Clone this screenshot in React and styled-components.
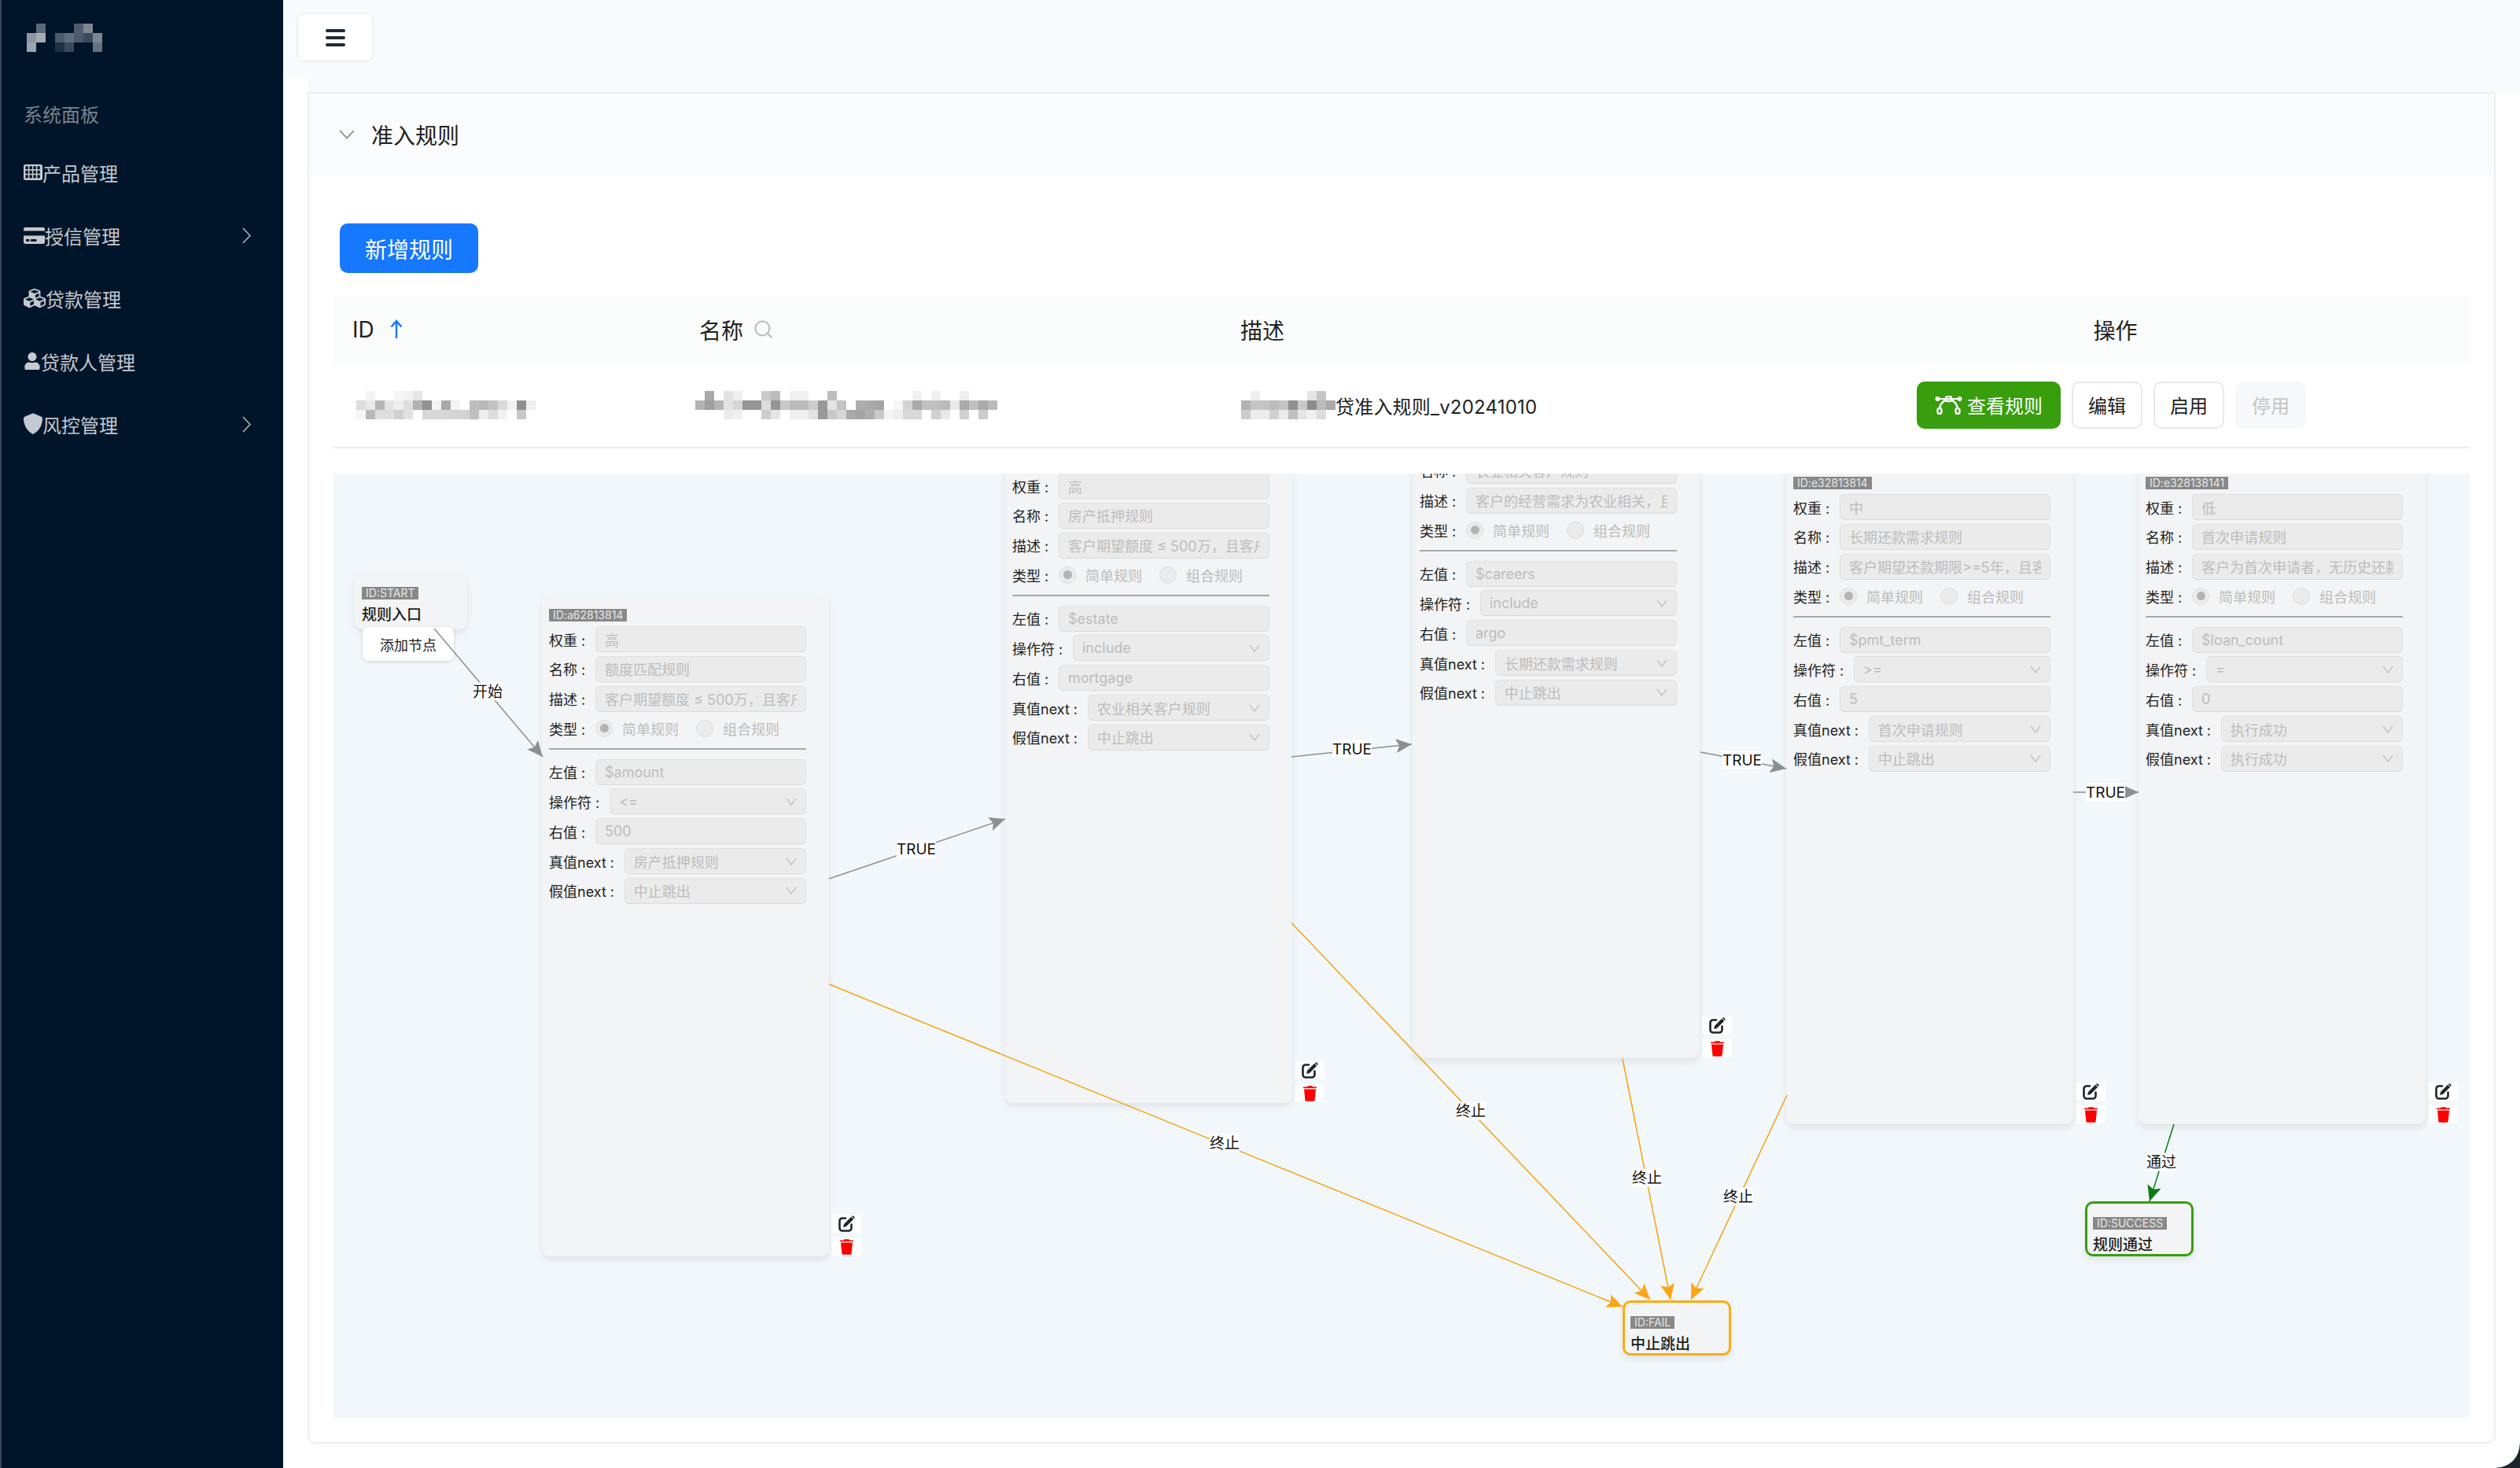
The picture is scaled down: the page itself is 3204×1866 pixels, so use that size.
import React from "react";
import styled, { createGlobalStyle } from "styled-components";
import { FaCreditCard, FaCubes, FaUser } from "react-icons/fa";
import { Search } from "lucide-react";

const Global = createGlobalStyle`
  html, body { margin: 0; padding: 0; background: #fff; }
  body { font-family: Inter, "Noto Sans CJK SC", sans-serif; color: #222; overflow: hidden; }
  * { box-sizing: border-box; }
`;

const Page = styled.div`
  position: relative;
  width: 3204px;
  height: 1866px;
  display: flex;
  overflow: hidden;
  background: #fff;
`;
const ScreenCorner = styled.div`
  position: absolute;
  right: 0;
  bottom: 0;
  width: 30px;
  height: 30px;
  background: radial-gradient(circle at 0 0, transparent 29px, #1c2430 30px);
`;

/* ---------- sidebar ---------- */
const Sidebar = styled.aside`
  width: 360px;
  flex: none;
  background: #001529;
  border-left: 2px solid #34475e;
  display: flex;
  flex-direction: column;
  padding: 30px 0 0 28px;
`;
const LogoBox = styled.div`
  margin-left: 4px;
  height: 36px;
  line-height: 0;
`;
const SectionLabel = styled.div`
  margin-top: 66px;
  height: 30px;
  line-height: 30px;
  font-size: 24px;
  color: #77818c;
`;
const Menu = styled.nav`
  margin-top: 17px;
  display: flex;
  flex-direction: column;
`;
const MenuItem = styled.div`
  height: 80px;
  display: flex;
  align-items: center;
  font-size: 24px;
  color: #c3c8ce;
  padding-right: 41px;
  & > svg:first-child { flex: none; color: #c4cad0; }
`;
const MenuText = styled.span`
  flex: 1;
`;

/* ---------- main ---------- */
const Main = styled.main`
  flex: 1;
  min-width: 0;
  display: flex;
  flex-direction: column;
`;
const TopBar = styled.header`
  height: 98px;
  flex: none;
  background: #f8fafc;
  padding: 16px 0 0 17px;
`;
const MenuButton = styled.button`
  width: 98px;
  height: 63px;
  border: 2px solid #eef0f3;
  border-radius: 10px;
  background: #fff;
  display: flex;
  flex-direction: column;
  justify-content: center;
  align-items: center;
  gap: 5px;
  padding: 0;
`;
const BurgerLine = styled.span`
  width: 25px;
  height: 4px;
  border-radius: 2px;
  background: #1f2937;
`;
const Body = styled.div`
  flex: 1;
  padding: 0 31px 31px;
  background: #fff;
`;
const TopBand = styled.div`
  height: 19px;
  margin-right: -31px;
  background: #f8fafc;
`;
const Card = styled.section`
  height: 1718px;
  border: 2px solid #ebedef;
  border-radius: 0 0 10px 10px;
  overflow: hidden;
`;
const CollapseHeader = styled.div`
  height: 104px;
  background: #fafbfc;
  display: flex;
  align-items: center;
  padding-left: 38px;
  gap: 21px;
  font-size: 28px;
  color: #222;
`;
const CollapseBody = styled.div`
  padding: 61px 31px 0;
`;
const PrimaryButton = styled.button`
  display: block;
  margin-left: 8px;
  width: 176px;
  height: 63px;
  border: 0;
  border-radius: 10px;
  background: #1677ff;
  color: #fff;
  font: inherit;
  font-size: 28px;
`;
const Table = styled.div`
  margin-top: 29px;
`;
const TableGrid = styled.div`
  display: grid;
  grid-template-columns: 445px 684px 692px 895px;
`;
const HeadRow = styled(TableGrid)`
  height: 85px;
  background: #fafbfb;
  font-size: 28px;
  color: #222;
`;
const HeadCell = styled.div`
  position: relative;
  display: flex;
  align-items: center;
  gap: ${(p) => p.$gap ?? 18}px;
  padding-left: ${(p) => p.$pad ?? 24}px;
  padding-right: ${(p) => (p.$center ? 6 : 0)}px;
  justify-content: ${(p) => (p.$center ? "center" : "flex-start")};
  & + &::before {
    content: "";
    position: absolute;
    left: 0;
    top: 8px;
    bottom: 8px;
    width: 2px;
    background: #f3f4f5;
  }
`;
const BodyRow = styled(TableGrid)`
  height: 109px;
  border-bottom: 2px solid #ebebeb;
  font-size: 24px;
  color: #222;
`;
const BodyCell = styled.div`
  display: flex;
  align-items: center;
  padding-left: ${(p) => p.$pad ?? 29}px;
  padding-top: 1px;
`;
const DescText = styled.span`
  letter-spacing: 0.2px;
`;
const Actions = styled.div`
  display: flex;
  align-items: center;
  justify-content: center;
  gap: 14px;
  padding-right: 16px;
`;
const ActionButton = styled.button`
  height: 60px;
  width: ${(p) => (p.$wide ? 183 : 90)}px;
  display: flex;
  align-items: center;
  justify-content: center;
  gap: 6px;
  padding: 0;
  border-radius: 10px;
  font: inherit;
  font-size: 24px;
  color: ${(p) => (p.$kind === "green" ? "#fff" : p.$kind === "off" ? "#c2c4c6" : "#222")};
  background: ${(p) => (p.$kind === "green" ? "#389e0d" : p.$kind === "off" ? "#f7f8f9" : "#fff")};
  border: 2px solid ${(p) => (p.$kind === "green" ? "#389e0d" : p.$kind === "off" ? "#f7f8f9" : "#e9e9e9")};
`;

/* ---------- canvas ---------- */
const Canvas = styled.div`
  position: relative;
  margin-top: 32px;
  height: 1200px;
  background: #f1f7fb;
  overflow: hidden;
`;
const NodeBase = styled.div`
  position: absolute;
  left: ${(p) => p.$x}px;
  top: ${(p) => p.$y}px;
  background: #f2f4f5;
  border-radius: 10px;
  box-shadow: 0 5px 9px rgba(0, 0, 0, 0.08);
`;
const RuleCard = styled(NodeBase)`
  width: 365px;
  height: 841px;
  padding: 18px 29px 0 9px;
`;
const IdTag = styled.div`
  width: fit-content;
  height: 16px;
  line-height: 16px;
  padding: 0 5px;
  background: #888;
  color: #e6e6e6;
  font-size: 14px;
  white-space: nowrap;
`;
const Form = styled.div`
  margin-top: 6px;
  display: flex;
  flex-direction: column;
`;
const Row = styled.div`
  display: flex;
  align-items: center;
  height: 33px;
  margin-bottom: 4.8px;
`;
const Label = styled.label`
  flex: none;
  font-size: 18px;
  color: #222;
  white-space: nowrap;
  &::after {
    content: ":";
    display: inline-block;
    width: 18px;
    padding-left: 5px;
  }
`;
const Field = styled.div`
  flex: 1;
  min-width: 0;
  height: 33px;
  display: flex;
  align-items: center;
  padding: 0 11px;
  background: #ebebeb;
  border: 1px solid #e0e0e0;
  border-bottom-color: #dadada;
  border-radius: 6px;
  color: #bcbcbc;
  font-size: 18px;
`;
const FieldText = styled.span`
  flex: 1;
  min-width: 0;
  overflow: hidden;
  white-space: nowrap;
`;
const RadioGroup = styled.div`
  display: flex;
  align-items: center;
`;
const RadioDot = styled.span`
  flex: none;
  width: 22px;
  height: 22px;
  border-radius: 50%;
  background: #ebebeb;
  border: 1px solid #dedede;
  display: flex;
  align-items: center;
  justify-content: center;
  margin-right: 12px;
  &::after {
    content: "";
    width: 11px;
    height: 11px;
    border-radius: 50%;
    background: ${(p) => (p.$on ? "#b3b3b3" : "transparent")};
  }
`;
const RadioText = styled.span`
  font-size: 18px;
  color: #bcbcbc;
  margin-right: 22px;
`;
const Divider = styled.div`
  height: 2px;
  background: #a6a8a9;
  margin: 4px 0 11.5px;
`;
const ToolStack = styled.div`
  position: absolute;
  left: calc(100% + 4px);
  bottom: 1px;
  display: flex;
  flex-direction: column;
  gap: 6px;
`;
const ToolBox = styled.div`
  width: 37px;
  height: 23px;
  background: #fff;
  display: flex;
  align-items: center;
  justify-content: center;
`;
const StartCard = styled(NodeBase)`
  width: 143px;
  height: 72px;
  padding: 18px 9px 0;
`;
const NodeName = styled.div`
  margin-top: 10px;
  font-size: 19px;
  line-height: 20px;
  font-weight: 500;
  color: #1c1c1c;
  white-space: nowrap;
`;
const AddNode = styled.div`
  position: absolute;
  left: 10px;
  top: 69px;
  width: 116px;
  height: 43px;
  padding-left: 22px;
  display: flex;
  align-items: center;
  background: #fff;
  border-radius: 8px;
  box-shadow: 0 1px 4px rgba(0, 0, 0, 0.16);
  font-size: 18px;
  color: #222;
`;
const EndCard = styled(NodeBase)`
  width: 138px;
  height: 70px;
  padding: 17px 7px 0;
  border: 3px solid ${(p) => p.$color};
`;
const EdgeLayer = styled.svg`
  position: absolute;
  left: 0;
  top: 0;
  pointer-events: none;
`;
const EdgeLabel = styled.div`
  position: absolute;
  left: ${(p) => p.$x}px;
  top: ${(p) => p.$y}px;
  transform: translate(-50%, -50%);
  background: #fff;
  padding: 0;
  height: 23px;
  line-height: 23px;
  font-size: 19px;
  color: #111;
  white-space: nowrap;
`;

/* ---------- drawings ---------- */
function Mosaic({ rows }) {
  const w = Math.max(...rows.map((r) => r.length)) * 12;
  return (
    <svg width={w} height={rows.length * 12} shapeRendering="crispEdges">
      {rows.map((r, y) =>
        r.map((c, x) => (c ? <rect key={x + "-" + y} x={x * 12} y={y * 12} width="12" height="12" fill={c} /> : null))
      )}
    </svg>
  );
}
const g = (v) => (v ? `#${v}${v}${v}` : null);
const rowOf = (s) => s.split(" ").map((v) => (v === "_" ? null : v.length === 2 ? g(v) : "#" + v));

const LOGO = [
  rowOf("_ 5b6878 _ _ _ 4f5d6e 7c8793 _"),
  rowOf("8e98a3 a3adb5 _ 4a5a6c 5f6d7c 4a5a6c 3a4a5c 7a8693"),
  rowOf("9aa5ac _ _ 1e3044 3a4a5c _ _ 66727f"),
];
const MOSAIC_ID = [
  rowOf("_ f3 _ _ f5 f2 e6"),
  rowOf("dc e8 b5 e4 ee de b0 90 f3 a9 f3 _ bd b9 c3 da f2 8f ef"),
  rowOf("f5 b8 de de cf e2 _ d7 d7 d7 d3 d3 bf ee dc f2 _ c8"),
];
const MOSAIC_NAME = [
  rowOf("_ a9 _ e3 f0 _ _ c9 bc _ f0 f0 _ _ bd _ _ _ _ _ _ _ _ f2 _ f0 _ _ ee"),
  rowOf("b3 9e b5 e3 d5 95 95 dd 96 c8 bb bb cc 99 e4 c3 _ ad a9 a5 _ f6 d2 a9 c0 c0 bb e8 aa c0 aa bb"),
  rowOf("_ _ _ ec f0 _ _ cd e5 _ f0 f0 e2 99 c8 d6 aa a5 ae c9 f5 ee d8 d8 _ d0 e8 _ d0 _ cc"),
];
const MOSAIC_DESC = [
  rowOf("_ ee _ _ _ _ _ e4 c5"),
  rowOf("b3 c4 c4 bb c4 90 c8 8c bb aa"),
  rowOf("cc ec ec d0 ea c0 e5 f0 dd"),
];

const GridIcon = () => (
  <svg width="24" height="20" viewBox="0 0 24 20">
    <rect width="24" height="20" rx="2.5" fill="currentColor" />
    {[0, 1, 2].map((r) =>
      [0, 1, 2, 3].map((c) => (
        <rect key={r + "" + c} x={2.4 + c * 5} y={2.2 + r * 5.6} width="3.4" height="4" fill="#001529" />
      ))
    )}
  </svg>
);
const ShieldIcon = () => (
  <svg width="24" height="28" viewBox="0 0 24 28" fill="currentColor">
    <path d="M12 .5c.5 0 1 .1 1.4.3l8.8 3.6c1 .4 1.8 1.4 1.8 2.6 0 5-2 14.8-12 20-10-5.2-12-15-12-20 0-1.2.8-2.2 1.8-2.6L10.6.8C11 .6 11.500.5 12 .5z" />
  </svg>
);
const Chevron = ({ dir = "right", color = "#b2b9c0" }) =>
  dir === "right" ? (
    <svg width="11" height="21" viewBox="0 0 11 21" fill="none" stroke={color} strokeWidth="1.5">
      <path d="M1 1l9 9.5L1 20" />
    </svg>
  ) : (
    <svg width="20" height="12" viewBox="0 0 20 12" fill="none" stroke={color} strokeWidth="1.8">
      <path d="M1 1l9 9.5L19 1" />
    </svg>
  );
const SelectArrow = () => (
  <svg width="14" height="10" viewBox="0 0 14 10" fill="none" stroke="#b8b8b8" strokeWidth="1.2">
    <path d="M1 1l6 8 6-8" />
  </svg>
);
const SortArrow = () => (
  <svg width="16" height="25" viewBox="0 0 16 25" fill="none" stroke="#1677ff" strokeWidth="2.4">
    <path d="M8 24V2M1.5 9.5L8 2l6.5 7.5" />
  </svg>
);
const BezierIcon = () => (
  <svg width="35" height="24" viewBox="0 0 35 24" fill="none" stroke="#fff">
    <path d="M3 4h29" strokeWidth="2" />
    <circle cx="3.5" cy="4" r="3" fill="#fff" stroke="none" />
    <circle cx="31.5" cy="4" r="3" fill="#fff" stroke="none" />
    <rect x="14" y="1" width="7" height="6" rx="2" strokeWidth="2.4" />
    <path d="M14.5 5C9 7.5 6.5 11 6 17M20.5 5C26 7.5 28.5 11 29 17" strokeWidth="2.6" />
    <rect x="3.5" y="16" width="5" height="7" rx="2.5" strokeWidth="2.4" />
    <rect x="26.5" y="16" width="5" height="7" rx="2.5" strokeWidth="2.4" />
  </svg>
);
const EditIcon = () => (
  <svg width="21" height="21" viewBox="0 0 21 21">
    <path
      d="M9 3.5H5A3.5 3.5 0 0 0 1.5 7v9A3.5 3.5 0 0 0 5 19.5h8a3.500 3.500 0 0 0 3.500-3.500v-4.500"
      fill="none"
      stroke="#20252b"
      strokeWidth="2.6"
      strokeLinecap="round"
    />
    <path d="M16.200 1.700l3 3L10 14l-3.900.9.900-3.900zM17.200.7a1.400 1.400 0 0 1 2 0l1 1a1.400 1.400 0 0 1 0 2l-.4.400-3-3z" fill="#20252b" />
  </svg>
);
const TrashIcon = () => (
  <svg width="17" height="21" viewBox="0 0 17 21" fill="#f00">
    <path d="M5.5 1.2h6L12 2.6h4.2a.8.8 0 0 1 .8.8v.8H0v-.8a.8.8 0 0 1 .8-.8H5z" />
    <path d="M1 5.4h15l-1.4 14a1.6 1.6 0 0 1-1.6 1.4H4a1.6 1.6 0 0 1-1.6-1.4z" />
  </svg>
);

/* ---------- data ---------- */
const OX = 424;
const OY = 602;
const RULES = [
  { x: 689, y: 756, id: "a62813814", w: "高", n: "额度匹配规则", d: "客户期望额度 ≤ 500万，且客户的信用良好", l: "$amount", o: "<=", r: "500", t: "房产抵押规则", f: "中止跳出" },
  { x: 1278, y: 561, id: "a62813815", w: "高", n: "房产抵押规则", d: "客户期望额度 ≤ 500万，且客户的信用良好", l: "$estate", o: "include", r: "mortgage", t: "农业相关客户规则", f: "中止跳出" },
  { x: 1796, y: 504, id: "b32813814", w: "高", n: "农业相关客户规则", d: "客户的经营需求为农业相关，且客户的信用良好", l: "$careers", o: "include", r: "argo", t: "长期还款需求规则", f: "中止跳出" },
  { x: 2271, y: 588, id: "e32813814", w: "中", n: "长期还款需求规则", d: "客户期望还款期限>=5年，且客户的信用良好", l: "$pmt_term", o: ">=", r: "5", t: "首次申请规则", f: "中止跳出" },
  { x: 2719, y: 588, id: "e328138141", w: "低", n: "首次申请规则", d: "客户为首次申请者，无历史还款记录的客户", l: "$loan_count", o: "=", r: "0", t: "执行成功", f: "执行成功" },
];
const GRAY = "#8b8f91";
const ORANGE = "#f5a40f";
const GREEN = "#0a7d12";
const EDGES = [
  { a: [552, 799], b: [690, 962], c: GRAY, m: "gray", label: "开始", at: [620, 879] },
  { a: [1054, 1117], b: [1278, 1041], c: GRAY, m: "gray", label: "TRUE", at: [1165, 1079] },
  { a: [1642, 962], b: [1795, 946], c: GRAY, m: "gray", label: "TRUE", at: [1719, 952] },
  { a: [2162, 956], b: [2271, 977], c: GRAY, m: "gray", label: "TRUE", at: [2215, 966] },
  { a: [2636, 1007], b: [2719, 1007], c: GRAY, m: "gray", label: "TRUE", at: [2677, 1007] },
  { a: [1054, 1251], b: [2063, 1661], c: ORANGE, m: "orange", label: "终止", at: [1557, 1453] },
  { a: [1642, 1173], b: [2098, 1652], c: ORANGE, m: "orange", label: "终止", at: [1870, 1412] },
  { a: [2063, 1346], b: [2124, 1652], c: ORANGE, m: "orange", label: "终止", at: [2094, 1497] },
  { a: [2272, 1392], b: [2150, 1652], c: ORANGE, m: "orange", label: "终止", at: [2210, 1521] },
  { a: [2764, 1429], b: [2733, 1527], c: GREEN, m: "green", label: "通过", at: [2748, 1477] },
];
const MARKERS = { gray: GRAY, orange: "#faa514", green: GREEN };

function TextField({ label, value }) {
  return (
    <Row>
      <Label>{label}</Label>
      <Field>
        <FieldText>{value}</FieldText>
      </Field>
    </Row>
  );
}
function SelectField({ label, value }) {
  return (
    <Row>
      <Label>{label}</Label>
      <Field>
        <FieldText>{value}</FieldText>
        <SelectArrow />
      </Field>
    </Row>
  );
}
function RuleNode({ rule }) {
  return (
    <RuleCard $x={rule.x - OX} $y={rule.y - OY}>
      <IdTag>ID:{rule.id}</IdTag>
      <Form>
        <TextField label="权重" value={rule.w} />
        <TextField label="名称" value={rule.n} />
        <TextField label="描述" value={rule.d} />
        <Row>
          <Label>类型</Label>
          <RadioGroup>
            <RadioDot $on />
            <RadioText>简单规则</RadioText>
            <RadioDot />
            <RadioText>组合规则</RadioText>
          </RadioGroup>
        </Row>
        <Divider />
        <TextField label="左值" value={rule.l} />
        <SelectField label="操作符" value={rule.o} />
        <TextField label="右值" value={rule.r} />
        <SelectField label="真值next" value={rule.t} />
        <SelectField label="假值next" value={rule.f} />
      </Form>
      <ToolStack>
        <ToolBox>
          <EditIcon />
        </ToolBox>
        <ToolBox>
          <TrashIcon />
        </ToolBox>
      </ToolStack>
    </RuleCard>
  );
}

export default function App() {
  return (
    <Page>
      <Global />
      <Sidebar>
        <LogoBox>
          <Mosaic rows={LOGO} />
        </LogoBox>
        <SectionLabel>系统面板</SectionLabel>
        <Menu>
          <MenuItem>
            <GridIcon />
            <MenuText>产品管理</MenuText>
          </MenuItem>
          <MenuItem>
            <FaCreditCard size={27} />
            <MenuText>授信管理</MenuText>
            <Chevron />
          </MenuItem>
          <MenuItem>
            <FaCubes size={28} />
            <MenuText>贷款管理</MenuText>
          </MenuItem>
          <MenuItem>
            <FaUser size={22} />
            <MenuText>贷款人管理</MenuText>
          </MenuItem>
          <MenuItem>
            <ShieldIcon />
            <MenuText>风控管理</MenuText>
            <Chevron />
          </MenuItem>
        </Menu>
      </Sidebar>
      <Main>
        <TopBar>
          <MenuButton>
            <BurgerLine />
            <BurgerLine />
            <BurgerLine />
          </MenuButton>
        </TopBar>
        <Body>
          <TopBand />
          <Card>
            <CollapseHeader>
              <Chevron dir="down" color="#8a8a8a" />
              准入规则
            </CollapseHeader>
            <CollapseBody>
              <PrimaryButton>新增规则</PrimaryButton>
              <Table>
                <HeadRow>
                  <HeadCell $gap={20}>
                    ID
                    <SortArrow />
                  </HeadCell>
                  <HeadCell $pad={20} $gap={12}>
                    名称
                    <Search size={27} color="#bfbfbf" strokeWidth={2} />
                  </HeadCell>
                  <HeadCell>描述</HeadCell>
                  <HeadCell $center $pad={0}>操作</HeadCell>
                </HeadRow>
                <BodyRow>
                  <BodyCell>
                    <Mosaic rows={MOSAIC_ID} />
                  </BodyCell>
                  <BodyCell $pad={15}>
                    <Mosaic rows={MOSAIC_NAME} />
                  </BodyCell>
                  <BodyCell $pad={25}>
                    <Mosaic rows={MOSAIC_DESC} />
                    <DescText>贷准入规则_v20241010</DescText>
                  </BodyCell>
                  <Actions>
                    <ActionButton $wide $kind="green">
                      <BezierIcon />
                      查看规则
                    </ActionButton>
                    <ActionButton>编辑</ActionButton>
                    <ActionButton>启用</ActionButton>
                    <ActionButton $kind="off">停用</ActionButton>
                  </Actions>
                </BodyRow>
              </Table>
              <Canvas>
                <StartCard $x={451 - OX} $y={728 - OY}>
                  <IdTag>ID:START</IdTag>
                  <NodeName>规则入口</NodeName>
                  <AddNode>添加节点</AddNode>
                </StartCard>
                {RULES.map((r) => (
                  <RuleNode key={r.x} rule={r} />
                ))}
                <EndCard $x={2063 - OX} $y={1653 - OY} $color="#faad14">
                  <IdTag>ID:FAIL</IdTag>
                  <NodeName>中止跳出</NodeName>
                </EndCard>
                <EndCard $x={2651 - OX} $y={1527 - OY} $color="#389e0d">
                  <IdTag>ID:SUCCESS</IdTag>
                  <NodeName>规则通过</NodeName>
                </EndCard>
                <EdgeLayer width="2716" height="1200">
                  <defs>
                    {Object.entries(MARKERS).map(([k, c]) => (
                      <marker
                        key={k}
                        id={"arrow-" + k}
                        markerUnits="userSpaceOnUse"
                        markerWidth="20"
                        markerHeight="18"
                        refX="20"
                        refY="9"
                        orient="auto"
                      >
                        <path d="M0 0L20 9L0 18L4 9z" fill={c} />
                      </marker>
                    ))}
                  </defs>
                  {EDGES.map((e, i) => (
                    <line
                      key={i}
                      x1={e.a[0] - OX}
                      y1={e.a[1] - OY}
                      x2={e.b[0] - OX}
                      y2={e.b[1] - OY}
                      stroke={e.c}
                      strokeWidth="1.5"
                      markerEnd={`url(#arrow-${e.m})`}
                    />
                  ))}
                </EdgeLayer>
                {EDGES.map((e, i) => (
                  <EdgeLabel key={i} $x={e.at[0] - OX} $y={e.at[1] - OY}>
                    {e.label}
                  </EdgeLabel>
                ))}
              </Canvas>
            </CollapseBody>
          </Card>
        </Body>
      </Main>
      <ScreenCorner />
    </Page>
  );
}
